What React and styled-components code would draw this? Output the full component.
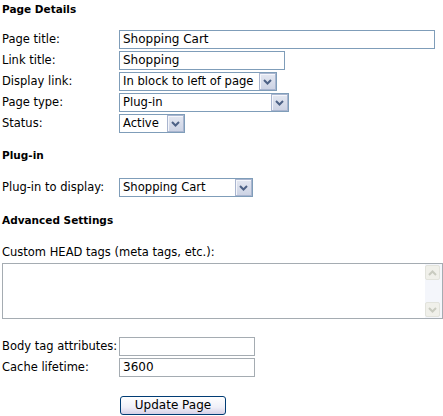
import React from 'react';
import styled, { createGlobalStyle } from 'styled-components';

const GlobalStyle = createGlobalStyle`
  body {
    margin: 0;
    background: #ffffff;
    font-family: "DejaVu Sans", Verdana, sans-serif;
    font-size: 11.5px;
    color: #000000;
  }
`

const Page = styled.div`
  width: 443px;
  padding: 0 0 0 2px;
  box-sizing: border-box;
`

const Heading = styled.h3`
  margin: ${props => props.$top || 0}px 0 0 0;
  font-size: 10.5px;
  font-weight: bold;
  line-height: 18px;
`

const FormGrid = styled.div`
  display: grid;
  grid-template-columns: 117px auto;
  row-gap: 2px;
  margin-top: ${props => props.$top || 0}px;
  align-items: center;
`

const Label = styled.label`
  line-height: 19px;
  white-space: nowrap;
`

const TextInput = styled.div`
  box-sizing: border-box;
  width: ${props => props.$width}px;
  height: 19px;
  border: 1px solid ${props => (props.$gray ? '#a5acb2' : '#7f9db9')};
  padding: 0 0 0 3px;
  font-size: 12px;
  line-height: 17px;
  background: #fff;
  white-space: nowrap;
  overflow: hidden;
`

const SelectBox = styled.div`
  box-sizing: border-box;
  width: ${props => props.$width}px;
  height: 19px;
  border: 1px solid #7f9db9;
  display: flex;
  align-items: center;
  justify-content: space-between;
  gap: 2px;
  background: #fff;
  padding: 0 0 0 3px;
`

const SelectText = styled.span`
  font-size: 11.6px;
  line-height: 17px;
  white-space: nowrap;
`

const DropButton = styled.span`
  box-sizing: border-box;
  flex: none;
  width: 17px;
  height: 17px;
  border: 1px solid #a9b5cf;
  background: linear-gradient(#e3e7f1, #cdd3e4);
  box-shadow: inset 1px 1px 0 #f4f6fb;
  display: flex;
  align-items: center;
  justify-content: center;
`

const FullLabel = styled.div`
  margin-top: ${props => props.$top || 0}px;
  line-height: 20px;
`

const TextArea = styled.div`
  box-sizing: border-box;
  width: 441px;
  height: 56px;
  margin-top: 1px;
  border: 1px solid #a5acb2;
  display: flex;
  justify-content: flex-end;
  background: #fff;
`

const ScrollTrack = styled.div`
  width: 16px;
  display: flex;
  flex-direction: column;
  justify-content: space-between;
  background: #f4f6fb;
  padding: 1px 1px 1px 0;
`

const ScrollButton = styled.span`
  box-sizing: border-box;
  width: 15px;
  height: 15px;
  border: 1px solid #e2e3dc;
  border-radius: 2px;
  background: #f0f0ea;
  display: flex;
  align-items: center;
  justify-content: center;
`

const ButtonRow = styled.div`
  padding-left: 118px;
  margin-top: 19px;
`

const Button = styled.button`
  box-sizing: border-box;
  width: 106px;
  height: 19px;
  border: 1px solid #003c74;
  border-radius: 3px;
  background: linear-gradient(#ffffff 0%, #f0f0f8 60%, #d6d0e6 100%);
  font-family: "DejaVu Sans", Verdana, sans-serif;
  font-size: 12px;
  line-height: 15px;
  padding: 0;
  color: #000;
`

const Chevron = ({ color = '#4d6185', up }) => (
  <svg width="9" height="6" viewBox="0 0 9 6">
    <path
      d={up ? 'M1 5 L4.5 1.5 L8 5' : 'M1 1 L4.5 4.5 L8 1'}
      fill="none"
      stroke={color}
      strokeWidth="2"
    />
  </svg>
)

function Select({ width, value }) {
  return (
    <SelectBox $width={width}>
      <SelectText>{value}</SelectText>
      <DropButton>
        <Chevron />
      </DropButton>
    </SelectBox>
  )
}

export default function App() {
  return (
    <Page>
      <GlobalStyle />
      <Heading>Page Details</Heading>
      <FormGrid $top={12}>
        <Label>Page title:</Label>
        <TextInput $width={316}>Shopping Cart</TextInput>
        <Label>Link title:</Label>
        <TextInput $width={166}>Shopping</TextInput>
        <Label>Display link:</Label>
        <Select width={158} value="In block to left of page" />
        <Label>Page type:</Label>
        <Select width={170} value="Plug-in" />
        <Label>Status:</Label>
        <Select width={66} value="Active" />
      </FormGrid>

      <Heading $top={13}>Plug-in</Heading>
      <FormGrid $top={14}>
        <Label>Plug-in to display:</Label>
        <Select width={134} value="Shopping Cart" />
      </FormGrid>

      <Heading $top={14}>Advanced Settings</Heading>
      <FullLabel $top={13}>Custom HEAD tags (meta tags, etc.):</FullLabel>
      <TextArea>
        <ScrollTrack>
          <ScrollButton>
            <Chevron up color="#c9cbc0" />
          </ScrollButton>
          <ScrollButton>
            <Chevron color="#c9cbc0" />
          </ScrollButton>
        </ScrollTrack>
      </TextArea>

      <FormGrid $top={18}>
        <Label>Body tag attributes:</Label>
        <TextInput $width={136} $gray />
        <Label>Cache lifetime:</Label>
        <TextInput $width={136} $gray>3600</TextInput>
      </FormGrid>

      <ButtonRow>
        <Button>Update Page</Button>
      </ButtonRow>
    </Page>
  )
}
